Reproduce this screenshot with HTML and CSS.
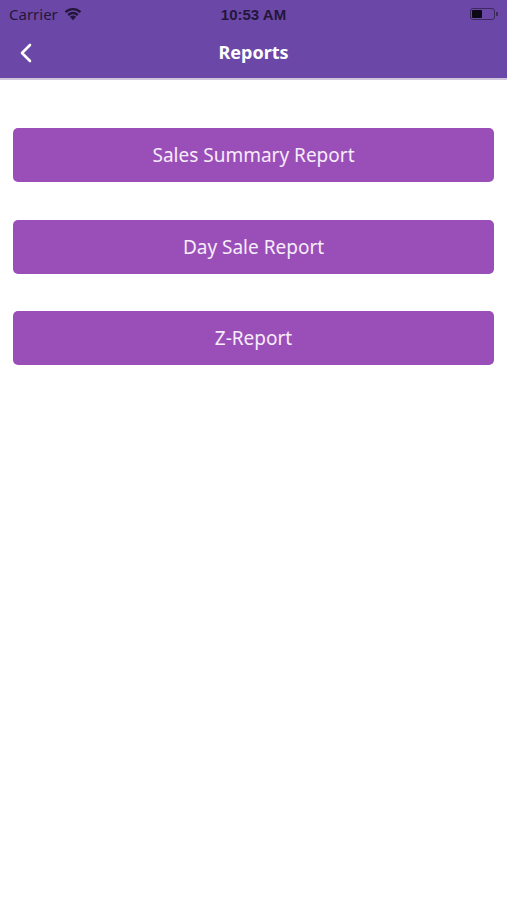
FILE: index.html
```html
<!DOCTYPE html>
<html lang="en">
<head>
  <meta charset="UTF-8">
  <meta name="viewport" content="width=device-width, initial-scale=1.0">
  <title>Reports</title>
  <link rel="stylesheet" href="styles.css">
</head>
<body>
  <header class="top">
    <div class="status-bar">
      <div class="carrier">
        Carrier
        <svg class="wifi" width="18" height="13" viewBox="0 0 18 13">
          <path d="M9 12.5 L6.2 9.4 A4 4 0 0 1 11.8 9.4 Z" fill="#24163a"/>
          <path d="M3.9 7.1 A7.3 7.3 0 0 1 14.1 7.1 L12.6 8.7 A5.2 5.2 0 0 0 5.4 8.7 Z" fill="#24163a"/>
          <path d="M1.5 4.5 A10.8 10.8 0 0 1 16.5 4.5 L15 6.1 A8.6 8.6 0 0 0 3 6.1 Z" fill="#24163a"/>
        </svg>
      </div>
      <div class="time">10:53 AM</div>
      <div class="battery">
        <span class="battery-body"><span class="battery-level"></span></span>
        <span class="battery-tip"></span>
      </div>
    </div>
    <nav class="nav-bar">
      <svg class="back" width="14" height="20" viewBox="0 0 14 20">
        <path d="M11 2 L3 10 L11 18" fill="none" stroke="#fff" stroke-width="2.6" stroke-linecap="round" stroke-linejoin="round"/>
      </svg>
      <h1>Reports</h1>
    </nav>
  </header>

  <section class="report-list">
    <button class="report-button">Sales Summary Report</button>
    <button class="report-button">Day Sale Report</button>
    <button class="report-button">Z-Report</button>
  </section>
</body>
</html>
```

FILE: styles.css
```css
body {
  margin: 0;
  padding: 0;
  background-color: #fff;
  font-family: "Noto Sans", "Open Sans", Arial, sans-serif;
}
.top {
  background-color: #6b48a8;
  height: 78px;
  border-bottom: 2px solid #cfc6de;
}
.status-bar {
  height: 28px;
  display: flex;
  align-items: center;
  justify-content: space-between;
  padding: 0 9px;
  color: #24163a;
  font-size: 15px;
}
.carrier {
  flex: 1;
  display: flex;
  align-items: center;
  gap: 5px;
}
.wifi {
  margin-top: -2px;
  width: 20px;
  height: 15px;
}
.time {
  font-weight: bold;
  font-family: "Liberation Sans", Arial, sans-serif;
}
.battery {
  flex: 1;
  display: flex;
  justify-content: flex-end;
  align-items: center;
}
.battery-body {
  width: 25px;
  height: 12px;
  border: 1px solid #3b2a5c;
  border-radius: 3px;
  padding: 1px;
  box-sizing: border-box;
  display: flex;
}
.battery-level {
  width: 10px;
  background-color: #0d0816;
  border-radius: 1px;
}
.battery-tip {
  width: 2px;
  height: 4px;
  background-color: #3b2a5c;
  border-radius: 0 1px 1px 0;
  margin-left: 1px;
}
.nav-bar {
  height: 50px;
  display: flex;
  align-items: center;
  justify-content: center;
  position: relative;
}
.back {
  position: absolute;
  left: 19px;
  top: 15px;
}
.nav-bar h1 {
  margin: 0;
  color: #fff;
  font-size: 18px;
  font-weight: bold;
  margin-top: -3px;
}
.report-list {
  padding: 48px 13px 0 13px;
  display: flex;
  flex-direction: column;
  gap: 37.5px;
}
.report-button {
  height: 54px;
  width: 100%;
  background-color: #9a4fb8;
  color: #f6ecfa;
  border: none;
  border-radius: 5px;
  font-family: "Noto Sans", "Open Sans", Arial, sans-serif;
  font-size: 19px;
  cursor: pointer;
}
```
